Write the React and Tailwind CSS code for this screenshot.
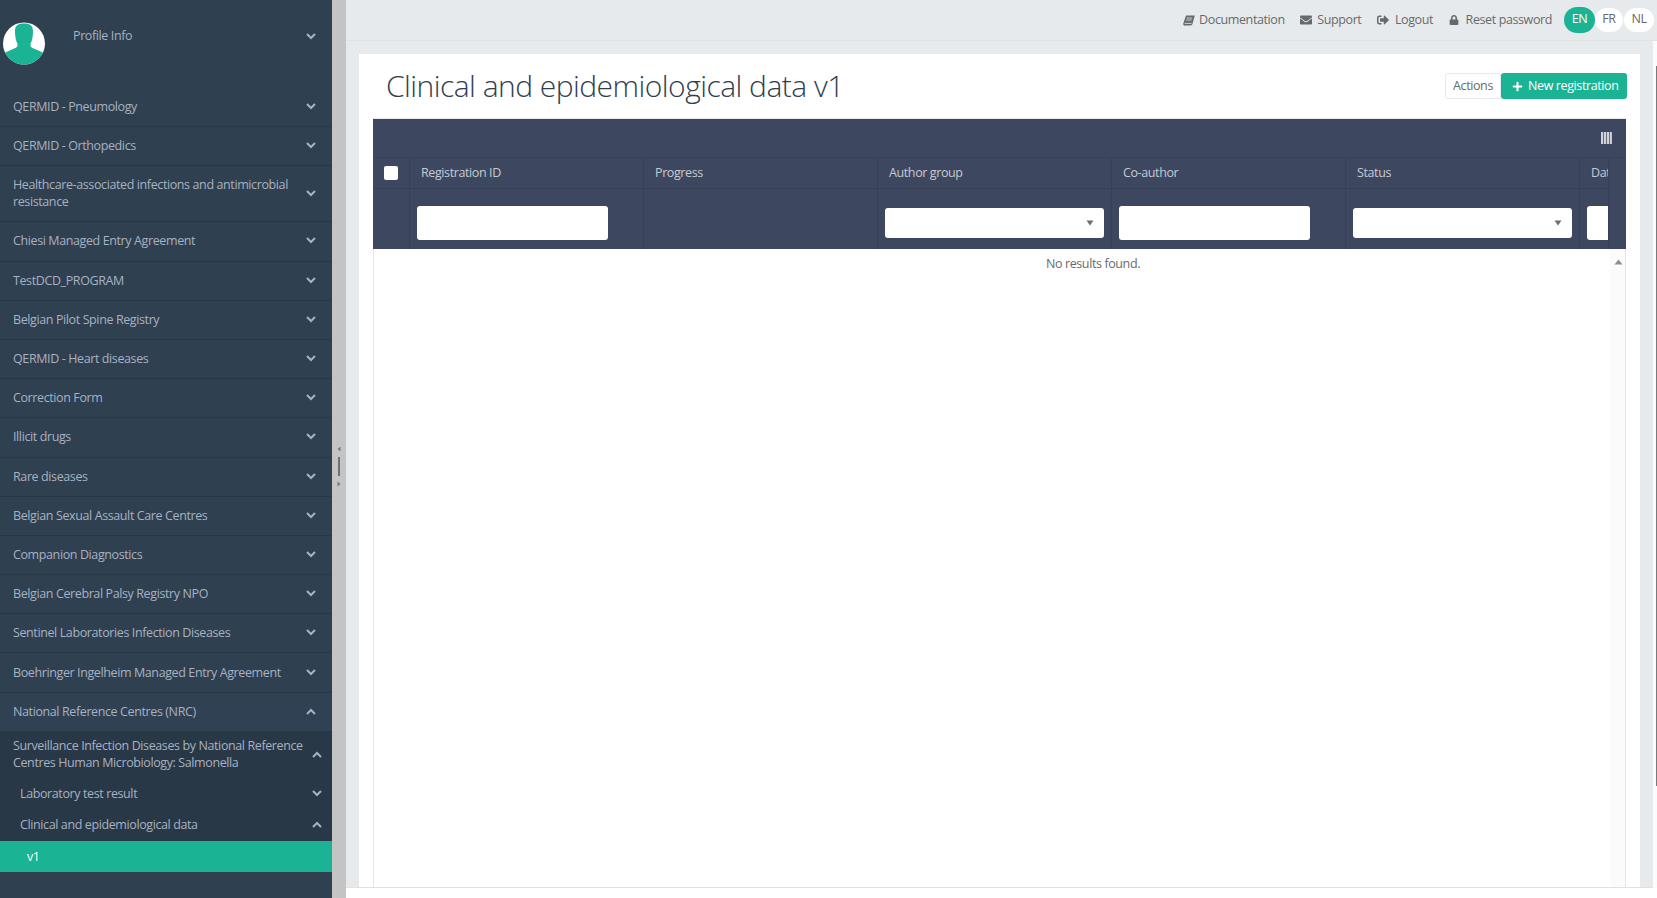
import React from "react";
import { FaEnvelope, FaSignOutAlt, FaLock, FaPlus } from "react-icons/fa";

function Chevron({ up, className = "" }) {
  return (
    <svg width="10" height="7" viewBox="0 0 10 7" className={"shrink-0 " + className}>
      <path d={up ? "M1 6 L5 2 L9 6" : "M1 1 L5 5 L9 1"} fill="none" stroke="#a7b1c2" strokeWidth="2" />
    </svg>
  );
}

function BookIcon() {
  return (
    <svg width="12" height="11" viewBox="0 0 12 11">
      <path d="M3 0.5 H11.8 L9.6 8.6 C9.3 9.8 8.6 10.5 7.4 10.5 H1.8 C0.6 10.5 0 9.6 0.3 8.4 Z" fill="#676a6c" />
      <path d="M1.6 8.4 H8.6 M3.6 3 H9.2 M3.2 5 H8.7" stroke="#e7eaec" strokeWidth="0.8" fill="none" />
    </svg>
  );
}

function Avatar() {
  return (
    <svg width="43" height="43" viewBox="0 0 43 43" className="shrink-0">
      <defs>
        <clipPath id="av"><circle cx="21" cy="21.5" r="21" /></clipPath>
      </defs>
      <circle cx="21" cy="21.5" r="21" fill="#ffffff" />
      <g clipPath="url(#av)" fill="#1ab394">
        <path d="M12 9 C12 3 16 1.5 21 1.5 C26 1.5 30 3 30 9 C30 15 29 19 27.5 22 C27 25 29 26 32 27 L42 31.5 L42 43 L0 43 L0 31.5 L10 27 C13 26 15 25 14.5 22 C13 19 12 15 12 9 Z" />
      </g>
    </svg>
  );
}

const items = [
  "QERMID - Pneumology",
  "QERMID - Orthopedics",
  "Healthcare-associated infections and antimicrobial resistance",
  "Chiesi Managed Entry Agreement",
  "TestDCD_PROGRAM",
  "Belgian Pilot Spine Registry",
  "QERMID - Heart diseases",
  "Correction Form",
  "Illicit drugs",
  "Rare diseases",
  "Belgian Sexual Assault Care Centres",
  "Companion Diagnostics",
  "Belgian Cerebral Palsy Registry NPO",
  "Sentinel Laboratories Infection Diseases",
  "Boehringer Ingelheim Managed Entry Agreement",
];

function Sidebar() {
  return (
    <aside className="w-[332px] shrink-0 h-full bg-[#2f4050] text-[#a7b1c2] text-[12.5px] tracking-[-0.39px] leading-[17px] overflow-hidden">
      <div className="h-[88px] flex items-start pl-[3px] pr-[16px] pt-[22px]">
        <Avatar />
        <span className="ml-[27px] mt-[5px] flex-1">Profile Info</span>
        <span className="mt-[11px]"><Chevron /></span>
      </div>
      {items.map((t, i) => (
        <div
          key={t}
          className={
            "flex items-center justify-between pl-[13px] pr-[16px] pb-[1px] border-b border-[#293846] " +
            (i === 2 ? "h-[56px]" : "h-[39.2px]")
          }
        >
          <span className="max-w-[280px]">{t}</span>
          <Chevron />
        </div>
      ))}
      <div className="flex items-center justify-between pl-[13px] pr-[16px] h-[38px] bg-[#2f4153]">
        <span>National Reference Centres (NRC)</span>
        <Chevron up />
      </div>
      <div className="bg-[#293846]">
        <div className="h-[47px] flex items-center justify-between pl-[13px] pr-[10px]">
          <span className="max-w-[295px]">Surveillance Infection Diseases by National Reference Centres Human Microbiology: Salmonella</span>
          <Chevron up />
        </div>
        <div className="h-[31px] flex items-center justify-between pl-[20px] pr-[10px]">
          <span>Laboratory test result</span>
          <Chevron />
        </div>
        <div className="h-[32px] flex items-center justify-between pl-[20px] pr-[10px]">
          <span>Clinical and epidemiological data</span>
          <Chevron up />
        </div>
      </div>
      <div className="h-[31px] flex items-center pl-[27px] bg-[#1ab394] text-white">v1</div>
    </aside>
  );
}

function Splitter() {
  return (
    <div className="w-[14px] shrink-0 h-full bg-[#c4c4c4] flex flex-col items-center justify-center gap-[5px] pt-[35px]">
      <svg width="4" height="6" viewBox="0 0 4 6"><path d="M3.5 0.5 L0.5 3 L3.5 5.5 Z" fill="#6f7a86" /></svg>
      <div className="w-[2px] h-[19px] bg-[#707070]" />
      <svg width="4" height="6" viewBox="0 0 4 6"><path d="M0.5 0.5 L3.5 3 L0.5 5.5 Z" fill="#6f7a86" /></svg>
    </div>
  );
}

function TopLink({ icon, children, iconClass = "w-[16px]" }) {
  return (
    <span className="flex items-center">
      <span className={"flex items-center " + iconClass}>{icon}</span>
      <span>{children}</span>
    </span>
  );
}

function Topbar() {
  return (
    <header className="h-[41px] shrink-0 bg-[#e7eaec] border-b border-[#dfe3e6] flex items-center justify-end pr-[3px] text-[12.5px] tracking-[-0.39px] text-[#676a6c]">
      <div className="flex items-center gap-[15.5px] mr-[12px]">
        <TopLink icon={<BookIcon />}>Documentation</TopLink>
        <TopLink icon={<FaEnvelope size={12} />} iconClass="w-[17px]">Support</TopLink>
        <TopLink icon={<FaSignOutAlt size={12} />} iconClass="w-[18px]">Logout</TopLink>
        <TopLink icon={<FaLock size={10} />} iconClass="w-[17px]">Reset password</TopLink>
      </div>
      <div className="flex items-center mb-[1px]">
        <span className="w-[31px] h-[26px] rounded-full bg-[#1ab394] text-white flex items-center justify-center">EN</span>
        <span className="w-[28px] h-[24px] rounded-full bg-white flex items-center justify-center">FR</span>
        <span className="w-[30px] h-[24px] rounded-full bg-white flex items-center justify-center ml-[1px]">NL</span>
      </div>
    </header>
  );
}

const columns = [
  ["Registration ID", "input"],
  ["Progress", "none"],
  ["Author group", "select"],
  ["Co-author", "input"],
  ["Status", "select"],
];

function FilterInput() {
  return <div className="w-[191px] h-[34px] shrink-0 bg-white rounded-[3px]" />;
}

function FilterSelect() {
  return (
    <div className="w-[219px] h-[30px] shrink-0 bg-white rounded-[3px] flex items-center justify-end pr-[10px]">
      <svg width="8" height="6" viewBox="0 0 8 6"><path d="M0.5 0.5 H7.5 L4 5.5 Z" fill="#6b6f75" /></svg>
    </div>
  );
}

function DataTable() {
  return (
    <div className="flex-1 min-h-0 w-[1253px] flex flex-col">
      <div className="h-[131px] shrink-0 bg-[#3d4860] border-t border-[#e7eaec] flex flex-col text-[12.5px] tracking-[-0.39px] text-[#c5cad2]">
        <div className="h-[38px] flex items-center justify-end pr-[14px] pb-[1px]">
          <svg width="11" height="12" viewBox="0 0 11 12">
            <rect x="0" y="0" width="2.2" height="12" fill="#d0d3d7" />
            <rect x="2.9" y="0" width="2.2" height="12" fill="#d0d3d7" />
            <rect x="5.8" y="0" width="2.2" height="12" fill="#d0d3d7" />
            <rect x="8.7" y="0" width="2.2" height="12" fill="#d0d3d7" />
          </svg>
        </div>
        <div className="flex-1 min-h-0 flex">
          <div className="flex-1 min-w-0 overflow-hidden flex border-r border-[#364157]">
            <div className="w-[37px] shrink-0 border-r border-[#364157]">
              <div className="h-[32px] border-y border-[#364157] flex items-center justify-center">
                <div className="w-[14px] h-[14px] bg-white rounded-[2px]" />
              </div>
              <div className="h-[60px]" />
            </div>
            {columns.map(([label, kind]) => (
              <div key={label} className="w-[234px] shrink-0 border-r border-[#364157]">
                <div className="h-[32px] border-y border-[#364157] flex items-center pl-[11px]">{label}</div>
                <div className="h-[60px] flex items-center pl-[7px] pt-[8px]">
                  {kind === "input" && <FilterInput />}
                  {kind === "select" && <FilterSelect />}
                </div>
              </div>
            ))}
            <div className="w-[29px] shrink-0 overflow-hidden">
              <div className="h-[32px] border-y border-[#364157] flex items-center pl-[11px] overflow-hidden">
                <span className="whitespace-nowrap">Date</span>
              </div>
              <div className="h-[60px] flex items-center pl-[7px] pt-[8px]"><FilterInput /></div>
            </div>
          </div>
          <div className="w-[17px] shrink-0 border-t border-[#364157]" />
        </div>
      </div>
      <div className="flex-1 min-h-0 flex bg-white border-x border-[#e7e7e7] text-[12.5px] tracking-[-0.39px] text-[#676a6c]">
        <div className="flex-1 min-w-0 overflow-hidden">
          <div className="w-[1438px] text-center pt-[6px] leading-[17px]">No results found.</div>
        </div>
        <div className="w-[15px] shrink-0 bg-[#fbfbfb] flex justify-center pt-[10px] pl-[2px]">
          <svg width="9" height="6" viewBox="0 0 9 6"><path d="M4.5 0.5 L8.5 5.5 H0.5 Z" fill="#8f8f8f" /></svg>
        </div>
      </div>
    </div>
  );
}

function Card() {
  return (
    <section className="h-full bg-white pl-[14px] flex flex-col">
      <div className="h-[64px] shrink-0 flex items-center justify-between pl-[13px] w-[1254px] text-[12.5px] tracking-[-0.39px]">
        <h1 className="text-[30px] tracking-[-0.53px] font-light leading-none text-[#2f3e4e] pb-[1px]">Clinical and epidemiological data v1</h1>
        <div className="flex items-center">
          <span className="w-[56px] h-[26px] bg-white border border-[#e7eaec] rounded-l-[3px] text-[#676a6c] flex items-center justify-center">Actions</span>
          <span className="w-[126px] h-[26px] bg-[#1ab394] rounded-[3px] text-white flex items-center pl-[11px] gap-[5px] whitespace-nowrap">
            <FaPlus size={11} />
            <span>New registration</span>
          </span>
        </div>
      </div>
      <DataTable />
    </section>
  );
}

export default function App() {
  return (
    <div className="w-[1657px] h-[898px] flex overflow-hidden bg-white" style={{ fontFamily: '"Open Sans", "Liberation Sans", sans-serif' }}>
      <Sidebar />
      <Splitter />
      <main className="flex-1 min-w-0 h-full flex flex-col">
        <Topbar />
        <div className="h-[847px] shrink-0 flex">
          <div className="flex-1 min-w-0 bg-[#e7eaec] border-b border-[#e1e1e1] pt-[13px] px-[13px]">
            <Card />
          </div>
          <div className="w-[4px] shrink-0 bg-[#fbfbfb] flex justify-end pt-[25px]">
            <div className="w-[1px] h-[720px] bg-[#7a7a7a]" />
          </div>
        </div>
      </main>
    </div>
  );
}
